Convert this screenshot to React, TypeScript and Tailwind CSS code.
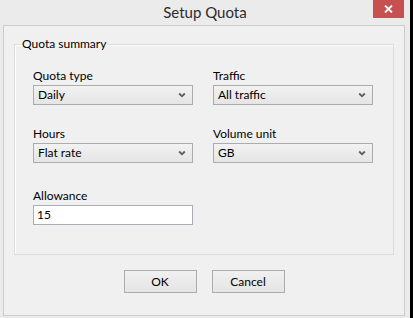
const font = "font-['Lato','Liberation_Sans',sans-serif]";

function Chevron() {
  return (
    <svg width="8" height="6" viewBox="0 0 8 6">
      <path d="M1.2 1.5 L4 4.3 L6.8 1.5" stroke="#5c5c5c" strokeWidth="1.8" fill="none" />
    </svg>
  );
}

function Select({ value }: { value: string }) {
  return (
    <div className="flex h-[20px] w-[160px] items-center justify-between border border-[#acacac] bg-linear-to-b from-[#f2f2f2] to-[#e5e5e5] pl-[4px] pr-[6px] text-[12px] text-black">
      <span>{value}</span>
      <Chevron />
    </div>
  );
}

function Field({ label, children, className = "" }: { label: string; children: React.ReactNode; className?: string }) {
  return (
    <div className={className}>
      <div className="mb-[2px] h-[15px] text-[12px] leading-[15px] text-black">{label}</div>
      {children}
    </div>
  );
}

function Button({ children }: { children: React.ReactNode }) {
  return (
    <div className="flex h-[23px] w-[73px] items-center justify-center border border-[#acacac] bg-linear-to-b from-[#f0f0f0] to-[#e5e5e5] text-[12px] text-black">
      {children}
    </div>
  );
}

export default function App() {
  return (
    <div className={`flex h-[318px] w-[413px] bg-black ${font}`}>
      <div className="flex h-full w-[410px] flex-col bg-[#ebebeb]">
        <div className="relative flex h-[25px] items-center justify-center">
          <span className="text-[15px] text-[#2b2b2b]">Setup Quota</span>
          <div className="absolute right-[6px] top-0 flex h-[18px] w-[31px] items-center justify-center bg-[#c75050]">
            <svg width="9" height="8" viewBox="0 0 9 8">
              <path d="M1 0.5 L8 7.5 M8 0.5 L1 7.5" stroke="#ffffff" strokeWidth="1.8" />
            </svg>
          </div>
        </div>
        <div className="ml-[3px] flex h-[291px] w-[402px] flex-col border border-[#cdcdcd] bg-[#f0f0f0]">
          <fieldset className="mx-[10px] mt-[10px] border border-[#dcdcdc] pb-[29px] pl-[18px] pt-[16px] shadow-[inset_1px_1px_0_#ffffff]">
            <legend className="ml-[-12px] px-[1px] text-[12px] leading-[16px] text-black">Quota summary</legend>
            <div className="grid grid-cols-[160px_160px] gap-x-[20px]">
              <Field label="Quota type">
                <Select value="Daily" />
              </Field>
              <Field label="Traffic">
                <Select value="All traffic" />
              </Field>
              <Field label="Hours" className="mt-[21px]">
                <Select value="Flat rate" />
              </Field>
              <Field label="Volume unit" className="mt-[21px]">
                <Select value="GB" />
              </Field>
              <Field label="Allowance" className="mt-[25px]">
                <div className="flex h-[20px] w-[160px] items-center border border-[#abadb3] bg-white pl-[3px] text-[12px] text-black">
                  15
                </div>
              </Field>
            </div>
          </fieldset>
          <div className="mt-[15px] flex justify-center gap-[15px]">
            <Button>OK</Button>
            <Button>Cancel</Button>
          </div>
        </div>
      </div>
    </div>
  );
}
